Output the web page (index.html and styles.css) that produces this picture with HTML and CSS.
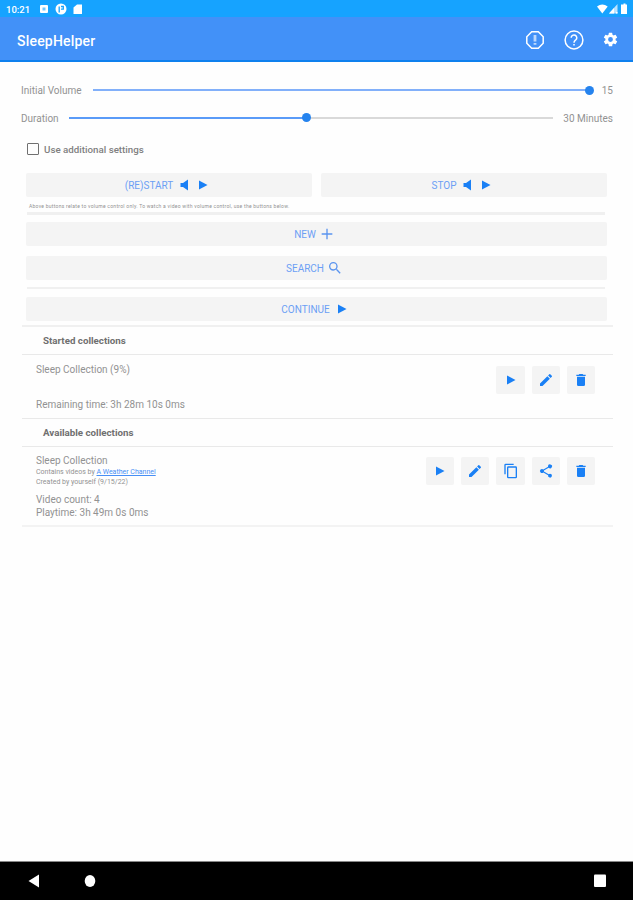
FILE: index.html
```html
<!DOCTYPE html>
<html lang="en">
<head>
    <meta charset="UTF-8">
    <meta name="viewport" content="width=device-width, initial-scale=1.0">
    <title>SleepHelper</title>
    <link rel="stylesheet" href="styles.css">
</head>
<body>
    <!-- Shared icons -->
    <svg class="icon-defs" width="0" height="0">
        <symbol id="play" viewBox="0 0 24 24"><path d="M4 3v18l17-9z"/></symbol>
        <symbol id="speaker" viewBox="0 0 24 24"><path d="M3 8v8h5l10 7V1L8 8z"/></symbol>
        <symbol id="plus" viewBox="0 0 24 24"><path d="M20 13h-7v7h-2v-7H4v-2h7V4h2v7h7z"/></symbol>
        <symbol id="search" viewBox="0 0 24 24"><path d="M15.5 14h-.79l-.28-.27A6.47 6.47 0 0 0 16 9.500 6.500 6.500 0 1 0 9.500 16c1.610 0 3.090-.59 4.230-1.570l.27.28v.79l5 4.990L20.490 19l-4.990-5zm-6 0a4.500 4.500 0 1 1 0-9 4.500 4.500 0 0 1 0 9z"/></symbol>
        <symbol id="edit" viewBox="0 0 24 24"><path d="M3 17.250V21h3.750L17.810 9.940l-3.750-3.750zM20.710 7.040a1 1 0 0 0 0-1.410l-2.340-2.340a1 1 0 0 0-1.410 0l-1.830 1.830 3.750 3.750z"/></symbol>
        <symbol id="trash" viewBox="0 0 24 24"><path d="M6 19a2 2 0 0 0 2 2h8a2 2 0 0 0 2-2V7H6zM19 4h-3.500l-1-1h-5l-1 1H5v2h14z"/></symbol>
        <symbol id="copy" viewBox="0 0 24 24"><path d="M16 1H4a2 2 0 0 0-2 2v14h2V3h12zm3 4H8a2 2 0 0 0-2 2v14a2 2 0 0 0 2 2h11a2 2 0 0 0 2-2V7a2 2 0 0 0-2-2zm0 16H8V7h11z"/></symbol>
        <symbol id="share" viewBox="0 0 24 24"><path d="M18 16.080c-.76 0-1.440.3-1.960.77L8.910 12.700a3.300 3.300 0 0 0 0-1.400l7.050-4.110A3 3 0 1 0 15 5c0 .24.040.47.090.7L8.040 9.810a3 3 0 1 0 0 4.380l7.120 4.160a2.920 2.920 0 1 0 2.840-2.270z"/></symbol>
        <symbol id="gear" viewBox="0 0 24 24"><path d="M19.140 12.940a7 7 0 0 0 0-1.880l2.030-1.580a.5.5 0 0 0 .12-.61l-1.920-3.320a.5.5 0 0 0-.59-.22l-2.390.96a7 7 0 0 0-1.620-.94l-.36-2.540a.5.5 0 0 0-.48-.41h-3.840a.5.5 0 0 0-.47.41l-.36 2.540a7 7 0 0 0-1.620.94l-2.390-.96a.5.5 0 0 0-.59.22L2.740 8.870a.5.500 0 0 0 .12.610l2.030 1.580a7 7 0 0 0 0 1.880l-2.030 1.580a.5.500 0 0 0-.12.610l1.920 3.320c.12.220.37.290.59.220l2.390-.96c.5.380 1.030.7 1.620.94l.36 2.540c.05.240.24.410.48.410h3.840c.24 0 .44-.17.470-.41l.36-2.540a7 7 0 0 0 1.620-.94l2.390.96c.22.080.47 0 .59-.22l1.920-3.320a.5.500 0 0 0-.12-.61zM12 15.400a3.400 3.400 0 1 1 0-6.800 3.400 3.400 0 0 1 0 6.800z"/></symbol>
    </svg>

    <div class="status-bar">
        <span class="clock">10:21</span>
        <svg class="status-icons" width="42" height="12" viewBox="0 0 42 12">
            <rect x="0" y="2" width="8" height="8" rx="1" fill="#fff"/>
            <path d="M2.500 4.500h3v3h-3z" fill="#72c7ff"/>
            <circle cx="21" cy="6" r="5.500" fill="#fff"/>
            <path d="M19.200 9.500V3.500M21 3.500h2.300v2.700H21" fill="none" stroke="#16a3ff" stroke-width="1.300"/>
            <path d="M37 1.500h5v9.500H33.500V4.500z" fill="#fff"/>
        </svg>
        <svg class="system-icons" width="32" height="12" viewBox="0 0 32 12">
            <path d="M0 3.500Q5.300-.5 10.700 3.500L5.300 10.500z" fill="#fff"/>
            <path d="M20.500 1v9.500h-8.500z" fill="#bce3ff"/>
            <path d="M17 5v5.500h-5zM19 9h1.500v1.500H19z" fill="#fff"/>
            <path d="M25.500 1.500h1V.5h2v1h1.500v9.500h-6V1.500z" fill="#fff"/>
        </svg>
    </div>

    <header class="app-bar">
        <h1>SleepHelper</h1>
        <svg class="alert-icon" width="20" height="20" viewBox="0 0 20 20" fill="none" stroke="#fff">
            <path d="M6.700 1.800h6.600l4.900 4.900v6.600l-4.900 4.900H6.700l-4.900-4.900V6.700z" stroke-width="1.500"/>
            <path d="M10 5v6.500M10 13v1.800" stroke-width="2.800" opacity=".65"/>
        </svg>
        <svg class="help-icon" width="20" height="20" viewBox="0 0 20 20" fill="none" stroke="#fff" stroke-width="1.500">
            <circle cx="10" cy="10" r="8.900"/>
            <path d="M7.200 7.800a2.800 2.800 0 1 1 4.500 2.200c-1 .8-1.700 1.200-1.700 2.700M10 14v1.500"/>
        </svg>
        <svg class="gear-icon" fill="#fff"><use href="#gear"/></svg>
    </header>

    <main>
        <div class="slider-row volume">
            <span class="label">Initial Volume</span>
            <div class="track"><div class="fill" style="width: 100%"></div><div class="thumb"></div></div>
            <span class="value">15</span>
        </div>
        <div class="slider-row duration">
            <span class="label">Duration</span>
            <div class="track"><div class="fill" style="width: 49%"></div><div class="thumb"></div></div>
            <span class="value">30 Minutes</span>
        </div>

        <label class="check-row"><span class="checkbox"></span><span class="check-text">Use additional settings</span></label>

        <div class="controls">
            <div class="button-row">
                <button class="wide-button restart"><span>(RE)START</span><svg><use href="#speaker"/></svg><svg><use href="#play"/></svg></button>
                <button class="wide-button stop"><span>STOP</span><svg><use href="#speaker"/></svg><svg><use href="#play"/></svg></button>
            </div>
            <p class="note"><span>Above buttons relate to volume control only. To watch a video with volume control, use the buttons below.</span></p>
            <div class="rule"></div>
            <button class="wide-button new"><span>NEW</span><svg><use href="#plus"/></svg></button>
            <button class="wide-button search"><span>SEARCH</span><svg><use href="#search"/></svg></button>
            <div class="rule second"></div>
            <button class="wide-button continue"><span>CONTINUE</span><svg><use href="#play"/></svg></button>
        </div>

        <section class="collections">
            <h2 class="started">Started collections</h2>
            <div class="item first">
                <div class="item-text">
                    <p class="t-name">Sleep Collection (9%)</p>
                    <p class="t-remaining">Remaining time: 3h 28m 10s 0ms</p>
                </div>
                <div class="actions">
                    <button><svg class="small"><use href="#play"/></svg></button>
                    <button><svg><use href="#edit"/></svg></button>
                    <button><svg><use href="#trash"/></svg></button>
                </div>
            </div>
            <h2 class="available">Available collections</h2>
            <div class="item second">
                <div class="item-text">
                    <p class="t-name2">Sleep Collection</p>
                    <p class="tiny">Contains videos by <a href="#">A Weather Channel</a></p>
                    <p class="tiny created">Created by yourself (9/15/22)</p>
                    <p class="t-count">Video count: 4</p>
                    <p class="t-play">Playtime: 3h 49m 0s 0ms</p>
                </div>
                <div class="actions">
                    <button><svg class="small"><use href="#play"/></svg></button>
                    <button><svg><use href="#edit"/></svg></button>
                    <button><svg><use href="#copy"/></svg></button>
                    <button><svg><use href="#share"/></svg></button>
                    <button><svg><use href="#trash"/></svg></button>
                </div>
            </div>
        </section>
    </main>

    <nav class="nav-bar">
        <svg width="12" height="14" viewBox="0 0 12 14"><path d="M11 .5v13L.5 7z" fill="#fff"/></svg>
        <svg class="home" width="12" height="14" viewBox="0 0 12 14"><ellipse cx="6" cy="7" rx="5.300" ry="6" fill="#fff"/></svg>
        <svg class="recent" width="12" height="14" viewBox="0 0 12 14"><rect y=".5" width="12" height="12.500" rx="1" fill="#fff"/></svg>
    </nav>
</body>
</html>
```

FILE: styles.css
```css
* {
    margin: 0;
    padding: 0;
    box-sizing: border-box;
}
body {
    height: 900px;
    display: flex;
    flex-direction: column;
    overflow: hidden;
    background: #fefefe;
    color: #929292;
    font-family: Roboto, "Liberation Sans", sans-serif;
    font-size: 10px;
}
svg {
    display: block;
    flex: none;
}
.icon-defs {
    display: none;
}
button {
    border: none;
    font: inherit;
    color: #6c9ff5;
    background: #f4f4f4;
    border-radius: 2px;
}
button svg {
    fill: #1a80f5;
}

/* Top bars */
.status-bar {
    height: 17px;
    flex: none;
    display: flex;
    align-items: center;
    padding: 1px 4px 0 6px;
    background: #16a3ff;
}
.clock {
    width: 34px;
    color: #fff;
    font-size: 9.500px;
    font-weight: 500;
}
.system-icons {
    margin-left: auto;
}
.app-bar {
    height: 45px;
    flex: none;
    display: flex;
    align-items: center;
    padding: 2px 14px 0 17px;
    background: #4291f8;
    border-bottom: 2px solid #0e80ee;
}
.app-bar h1 {
    flex: 1;
    padding-top: 2px;
    color: #fff;
    font-size: 14px;
    font-weight: 500;
    letter-spacing: 0.2px;
}
.help-icon {
    margin: 0 18px 0 19px;
}
.gear-icon {
    width: 17px;
    height: 17px;
}

/* Sliders */
main {
    flex: 1;
    padding: 14px 20px 0 21px;
}
.slider-row {
    height: 28px;
    display: flex;
    align-items: center;
}
.duration {
    height: 27px;
}
.label {
    width: 72px;
    padding-top: 1px;
}
.duration .label {
    width: 48px;
}
.track {
    flex: 1;
    height: 2px;
    display: flex;
    align-items: center;
    background: #d9d9d9;
}
.fill {
    height: 2px;
    background: #5a9bf8;
}
.volume .fill {
    background: #82b0fa;
}
.thumb {
    width: 9px;
    height: 9px;
    flex: none;
    margin: 0 -4px;
    border-radius: 50%;
    background: #2583ee;
}
.value {
    width: 23px;
    padding-top: 1px;
    text-align: right;
}
.duration .value {
    width: 60px;
}

.check-row {
    height: 30px;
    display: flex;
    align-items: center;
    padding: 6px 0 0 6px;
    margin-bottom: 12px;
    color: #808080;
}
.checkbox {
    width: 12px;
    height: 12px;
    margin-right: 5px;
    border: 1.500px solid #707070;
    border-radius: 1px;
}
.check-text {
    font-size: 9.750px;
    font-weight: 500;
}

/* Buttons */
.controls {
    padding: 0 6px 0 5px;
}
.button-row {
    display: flex;
    gap: 9px;
}
.wide-button {
    width: 100%;
    height: 24px;
    display: flex;
    align-items: center;
    justify-content: center;
    padding-right: 4px;
}
.wide-button svg {
    width: 12px;
    height: 12px;
    margin-left: 6px;
}
.restart, .stop {
    padding-right: 4px;
}
.note {
    height: 15px;
    padding: 3px 0 0 3px;
    font-size: 5px;
    line-height: 12px;
    letter-spacing: 0.260px;
    white-space: nowrap;
}
.rule {
    height: 3px;
    margin: 0 2px 7px 1px;
    background: #f0f0f0;
}
.wide-button.new {
    margin-bottom: 10px;
}
.wide-button.search {
    margin-bottom: 7px;
}
.wide-button.new svg, .wide-button.search svg {
    width: 16px;
    height: 16px;
    margin-left: 3px;
    fill: #5a94ef;
}
.rule.second {
    height: 2px;
    margin-bottom: 8px;
}

/* Collections */
.collections {
    margin: 4px 0 0 1px;
    border-top: 2px solid #f0f0f0;
    border-bottom: 2px solid #f3f3f3;
}
.collections h2 {
    height: 28px;
    padding-left: 21px;
    border-bottom: 1px solid #e9e9e9;
    color: #707070;
    font-size: 9.750px;
    font-weight: 700;
    line-height: 28px;
}
.item {
    display: flex;
    justify-content: space-between;
    padding: 0 18px 0 14px;
}
.item p {
    line-height: 13px;
    white-space: nowrap;
}
.item.first {
    height: 64px;
    padding-top: 8px;
    border-bottom: 1px solid #e9e9e9;
}
.t-remaining {
    margin-top: 22px;
}
.item.second {
    height: 78px;
    padding-top: 7px;
}
.item .tiny {
    font-size: 7px;
    line-height: 10px;
}
.tiny a {
    color: #478ff5;
}
.t-count {
    margin-top: 6px;
}
.actions {
    display: flex;
    gap: 7px;
    padding-top: 3px;
}
.actions button {
    width: 28.200px;
    height: 28px;
    display: flex;
    align-items: center;
    justify-content: center;
}
.actions svg {
    width: 16px;
    height: 16px;
}
.actions .small {
    width: 12px;
    height: 12px;
}

/* System navigation */
.nav-bar {
    height: 39px;
    flex: none;
    display: flex;
    align-items: center;
    padding: 0 27px 0 28px;
    background: #000;
    border-top: 1px solid #888;
}
.home {
    margin-left: 44px;
}
.recent {
    margin-left: auto;
}
```
